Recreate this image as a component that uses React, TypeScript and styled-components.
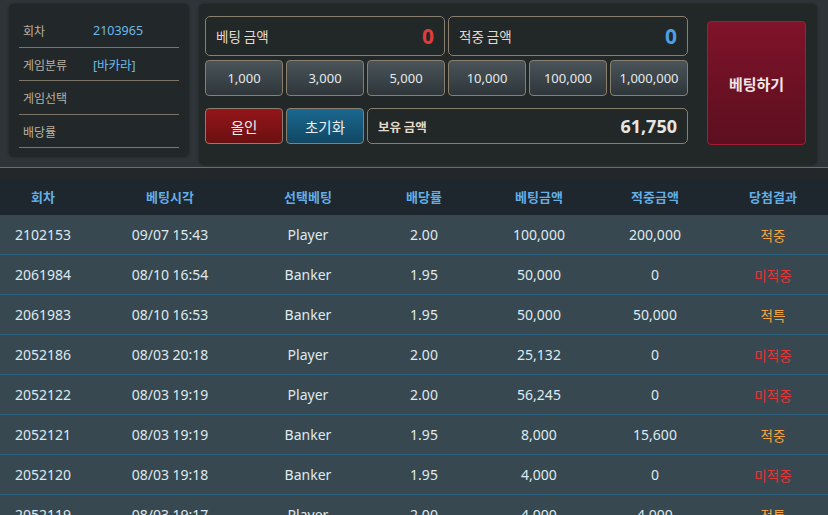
import React from "react";
import styled, { createGlobalStyle } from "styled-components";

const Global = createGlobalStyle`
  html, body { margin: 0; padding: 0; background: #23272a; }
  body { font-family: "Noto Sans", "Noto Sans CJK KR", sans-serif; width: 828px; overflow: hidden; }
  * { box-sizing: border-box; }
`;

const Page = styled.div`
  width: 828px;
  height: 515px;
  background: #23272a;
  overflow: hidden;
`;

const TopArea = styled.div`
  display: flex;
  align-items: flex-start;
  gap: 10px;
  padding: 4px 11px 0 9px;
  height: 168px;
  background: #2e3437;
  border-bottom: 1px solid #6f6e66;
`;

const InfoCard = styled.div`
  width: 180px;
  height: 153px;
  background: #222829;
  border-radius: 5px;
  padding: 10px 10px 0;
  box-shadow: 0 0 3px rgba(0, 0, 0, 0.35);
`;

const InfoRow = styled.div`
  display: flex;
  align-items: center;
  height: 33.5px;
  border-bottom: 1px solid #7d7468;
  padding-left: 4px;
  padding-top: 1px;
`;

const InfoLabel = styled.span`
  width: 70px;
  font-size: 12px;
  color: #b9b0a2;
  font-family: "Noto Sans CJK KR", sans-serif;
`;

const InfoValue = styled.span`
  font-size: 12.5px;
  color: #6cb9ea;
  font-family: "Noto Sans", "Noto Sans CJK KR", sans-serif;
`;

const BetCard = styled.div`
  flex: 1;
  height: 161px;
  background: #222728;
  border-radius: 5px;
  display: flex;
  padding: 12px 11px 0 6px;
  gap: 19px;
  box-shadow: 0 0 3px rgba(0, 0, 0, 0.35);
`;

const BetGrid = styled.div`
  display: grid;
  grid-template-columns: repeat(6, 78px);
  grid-template-rows: 40px 36px 44px;
  column-gap: 3px;
  row-gap: 4px;
`;

const AmountBox = styled.div<{ $span: number; $mt?: number }>`
  grid-column: span ${(p) => p.$span};
  border: 1px solid #8a7e6e;
  border-radius: 5px;
  display: flex;
  align-items: center;
  justify-content: space-between;
  padding: 0 10px 0 10px;
  margin-top: ${(p) => p.$mt ?? 0}px;
`;

const AmountLabel = styled.span<{ $bold?: boolean }>`
  font-family: "Noto Sans CJK KR", sans-serif;
  font-size: ${(p) => (p.$bold ? "12.5px" : "13.5px")};
  font-weight: ${(p) => (p.$bold ? 700 : 400)};
  color: #e3dac9;
`;

const AmountValue = styled.span<{ $color: string; $size: number }>`
  font-family: "Noto Sans", sans-serif;
  font-weight: 700;
  font-size: ${(p) => p.$size}px;
  color: ${(p) => p.$color};
  line-height: 1;
`;

const Chip = styled.button`
  border: 1px solid #8a7e6e;
  border-radius: 4px;
  background: linear-gradient(#4a5459, #2e363a);
  color: #e6e9ea;
  font-family: "Noto Sans", sans-serif;
  font-size: 13px;
  padding: 0;
  cursor: pointer;
`;

const ActionButton = styled.button<{ $variant: "red" | "blue" }>`
  margin-top: 8px;
  border: 1px solid #8a7e6e;
  border-radius: 4px;
  background: ${(p) =>
    p.$variant === "red"
      ? "linear-gradient(#93161a, #6c0f10)"
      : "linear-gradient(#1b6890, #114763)"};
  color: #eceff0;
  font-family: "Noto Sans CJK KR", sans-serif;
  font-size: 14.5px;
  padding: 0;
  cursor: pointer;
`;

const SubmitButton = styled.button`
  margin-top: 5px;
  width: 99px;
  height: 124px;
  border: 1px solid #a41e33;
  border-radius: 4px;
  background: linear-gradient(#7f1329, #5c0f20);
  color: #f2e6e6;
  font-family: "Noto Sans CJK KR", sans-serif;
  font-weight: 700;
  font-size: 15px;
  padding: 0;
  cursor: pointer;
`;

const Table = styled.div`
  margin-top: 10px;
`;

const cols = "86px 168px 108px 124px 106px 126px 110px";

const HeaderRow = styled.div`
  display: grid;
  grid-template-columns: ${cols};
  height: 37px;
  background: #1e262e;
  align-items: center;
`;

const HeaderCell = styled.div`
  text-align: center;
  font-family: "Noto Sans CJK KR", sans-serif;
  font-weight: 700;
  font-size: 13px;
  color: #62aee6;
`;

const DataRow = styled.div`
  display: grid;
  grid-template-columns: ${cols};
  height: 40px;
  background: #384851;
  border-bottom: 1px solid #2b5f7e;
  align-items: center;
`;

const Cell = styled.div<{ $color?: string }>`
  text-align: center;
  font-family: "Noto Sans", "Noto Sans CJK KR", sans-serif;
  font-size: 14px;
  color: ${(p) => p.$color ?? "#dfe8ee"};
`;

const ResultCell = styled(Cell)`
  font-family: "Noto Sans CJK KR", sans-serif;
  font-size: 13.5px;
`;

const rows = [
  ["2102153", "09/07 15:43", "Player", "2.00", "100,000", "200,000", "적중"],
  ["2061984", "08/10 16:54", "Banker", "1.95", "50,000", "0", "미적중"],
  ["2061983", "08/10 16:53", "Banker", "1.95", "50,000", "50,000", "적특"],
  ["2052186", "08/03 20:18", "Player", "2.00", "25,132", "0", "미적중"],
  ["2052122", "08/03 19:19", "Player", "2.00", "56,245", "0", "미적중"],
  ["2052121", "08/03 19:19", "Banker", "1.95", "8,000", "15,600", "적중"],
  ["2052120", "08/03 19:18", "Banker", "1.95", "4,000", "0", "미적중"],
  ["2052119", "08/03 19:17", "Player", "2.00", "4,000", "4,000", "적특"],
];

const resultColor = (r: string) => (r === "미적중" ? "#e23535" : "#f0a441");

const chips = ["1,000", "3,000", "5,000", "10,000", "100,000", "1,000,000"];

export default function App() {
  return (
    <Page>
      <Global />
      <TopArea>
        <InfoCard>
          <InfoRow>
            <InfoLabel>회차</InfoLabel>
            <InfoValue>2103965</InfoValue>
          </InfoRow>
          <InfoRow>
            <InfoLabel>게임분류</InfoLabel>
            <InfoValue>[바카라]</InfoValue>
          </InfoRow>
          <InfoRow>
            <InfoLabel>게임선택</InfoLabel>
          </InfoRow>
          <InfoRow>
            <InfoLabel>배당률</InfoLabel>
          </InfoRow>
        </InfoCard>
        <BetCard>
          <BetGrid>
            <AmountBox $span={3}>
              <AmountLabel>베팅 금액</AmountLabel>
              <AmountValue $color="#e23b3b" $size={21}>0</AmountValue>
            </AmountBox>
            <AmountBox $span={3}>
              <AmountLabel>적중 금액</AmountLabel>
              <AmountValue $color="#4b9fe2" $size={21}>0</AmountValue>
            </AmountBox>
            {chips.map((c) => (
              <Chip key={c}>{c}</Chip>
            ))}
            <ActionButton $variant="red">올인</ActionButton>
            <ActionButton $variant="blue">초기화</ActionButton>
            <AmountBox $span={4} $mt={8}>
              <AmountLabel $bold>보유 금액</AmountLabel>
              <AmountValue $color="#e8e6e0" $size={18}>61,750</AmountValue>
            </AmountBox>
          </BetGrid>
          <SubmitButton>베팅하기</SubmitButton>
        </BetCard>
      </TopArea>
      <Table>
        <HeaderRow>
          {["회차", "베팅시각", "선택베팅", "배당률", "베팅금액", "적중금액", "당첨결과"].map((h) => (
            <HeaderCell key={h}>{h}</HeaderCell>
          ))}
        </HeaderRow>
        {rows.map((r) => (
          <DataRow key={r[0]}>
            {r.slice(0, 6).map((v, i) => (
              <Cell key={i}>{v}</Cell>
            ))}
            <ResultCell $color={resultColor(r[6])}>{r[6]}</ResultCell>
          </DataRow>
        ))}
      </Table>
    </Page>
  );
}
